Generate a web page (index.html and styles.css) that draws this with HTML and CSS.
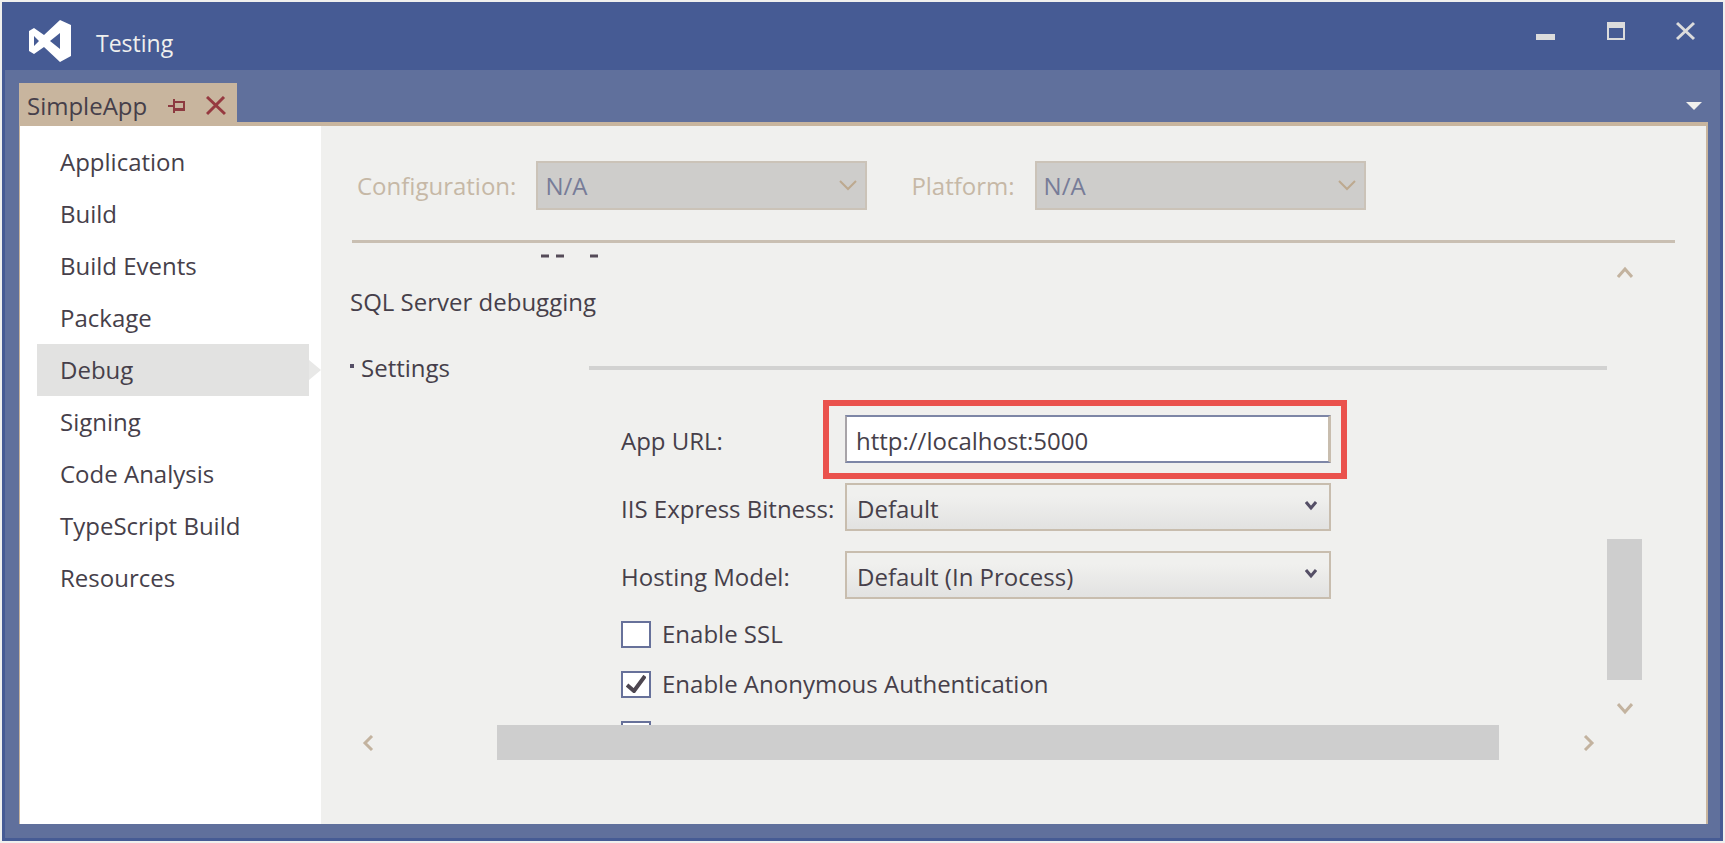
FILE: index.html
```html
<!DOCTYPE html>
<html lang="en">
<head>
<meta charset="utf-8">
<title>Testing</title>
<link rel="stylesheet" href="styles.css">
</head>
<body>
<div class="window">
  <header class="titlebar">
    <svg class="logo" width="43" height="42" viewBox="0 0 43 42" aria-hidden="true">
      <path fill="#fff" fill-rule="evenodd" d="M31 0 L42 5 V36 L31 42 L15 27 L5 34 L0 31 V11 L5 8 L15 15 Z M5 16 V26 L10 21 Z M31 13 L21 21 L31 29 Z"/>
    </svg>
    <h1 class="title">Testing</h1>
    <div class="caption">
      <button class="caption-btn" aria-label="Minimize"><svg width="20" height="20" viewBox="0 0 20 20"><path d="M0 13h19v6H0z" fill="#dcdcdc"/></svg></button>
      <button class="caption-btn" aria-label="Maximize"><svg width="20" height="20" viewBox="0 0 20 20"><path fill="#dcdcdc" fill-rule="evenodd" d="M1 1h18v18H1z M3 7v10h14V7z"/></svg></button>
      <button class="caption-btn" aria-label="Close"><svg width="20" height="20" viewBox="0 0 20 20"><path d="M1 2l17 16M18 2L1 18" stroke="#dcdcdc" stroke-width="3" fill="none"/></svg></button>
    </div>
  </header>
  <div class="frame">
    <div class="tabs">
      <div class="tab">
        <span>SimpleApp</span>
        <button class="tab-btn pin" aria-label="Pin tab"><svg width="18" height="16" viewBox="0 0 18 16"><path d="M0 8h6M6 1v14M7 4h9v8H7M7 11h9" fill="none" stroke="#8d3a40" stroke-width="2"/></svg></button>
        <button class="tab-btn" aria-label="Close tab"><svg width="20" height="20" viewBox="0 0 20 20"><path d="M1 1l18 17M18 1L1 18" fill="none" stroke="#963a40" stroke-width="3"/></svg></button>
      </div>
      <button class="tab-btn overflow" aria-label="Open documents"><svg width="16" height="8" viewBox="0 0 16 8"><path d="M0 0h16L8 8z" fill="#f0f0ee"/></svg></button>
    </div>
    <div class="panel">
      <nav class="sidebar">
        <a class="item" href="#application">Application</a>
        <a class="item" href="#build">Build</a>
        <a class="item" href="#build-events">Build Events</a>
        <a class="item" href="#package">Package</a>
        <a class="item active" href="#debug" aria-current="page">Debug</a>
        <a class="item" href="#signing">Signing</a>
        <a class="item" href="#code-analysis">Code Analysis</a>
        <a class="item" href="#typescript-build">TypeScript Build</a>
        <a class="item" href="#resources">Resources</a>
      </nav>
      <main class="page">
        <div class="target">
          <label class="target-label" for="configuration">Configuration:</label>
          <div class="combo disabled">
            <select id="configuration" disabled><option>N/A</option></select>
            <svg class="chevron" width="18" height="12" viewBox="0 0 18 12"><path d="M1 2l8 8 8-8" fill="none" stroke="#bda98f" stroke-width="2"/></svg>
          </div>
          <label class="target-label" for="platform">Platform:</label>
          <div class="combo disabled">
            <select id="platform" disabled><option>N/A</option></select>
            <svg class="chevron" width="18" height="12" viewBox="0 0 18 12"><path d="M1 2l8 8 8-8" fill="none" stroke="#bda98f" stroke-width="2"/></svg>
          </div>
        </div>
        <hr class="rule">
        <div class="scroller">
          <div class="view">
            <!-- Descenders of the row scrolled under the top edge -->
            <svg class="cutoff" width="60" height="18" viewBox="0 0 60 18" aria-hidden="true"><path d="M1 13h8M16 13h8M50 13h8" stroke="#554b58" stroke-width="3" fill="none"/></svg>
            <p class="line">SQL Server debugging</p>
            <div class="section">
              <span class="dot"></span>
              <h2 class="section-title">Settings</h2>
              <span class="section-rule"></span>
            </div>
            <form class="form">
              <label class="form-label" for="url">App URL:</label>
              <div class="field marked"><input class="text" id="url" type="text" value="http://localhost:5000"></div>
              <label class="form-label" for="bitness">IIS Express Bitness:</label>
              <div class="combo">
                <select id="bitness"><option>Default</option></select>
                <svg class="chevron" width="12" height="10" viewBox="0 0 12 10"><path d="M1 1l5 6 5-6" fill="none" stroke="#554f66" stroke-width="3"/></svg>
              </div>
              <label class="form-label" for="hosting">Hosting Model:</label>
              <div class="combo">
                <select id="hosting"><option>Default (In Process)</option></select>
                <svg class="chevron" width="12" height="10" viewBox="0 0 12 10"><path d="M1 1l5 6 5-6" fill="none" stroke="#554f66" stroke-width="3"/></svg>
              </div>
              <div class="checks">
                <label class="check"><input type="checkbox"><svg class="tick" width="20" height="18" viewBox="0 0 20 18"><path d="M1 10l7 6L19 1" fill="none" stroke="#4d4650" stroke-width="4"/></svg><span>Enable SSL</span></label>
                <label class="check"><input type="checkbox" checked><svg class="tick" width="20" height="18" viewBox="0 0 20 18"><path d="M1 10l7 6L19 1" fill="none" stroke="#4d4650" stroke-width="4"/></svg><span>Enable Anonymous Authentication</span></label>
                <div class="check"><input type="checkbox" aria-label="Option"></div>
              </div>
            </form>
          </div>
          <div class="vbar">
            <button class="bar-btn" aria-label="Scroll up"><svg width="16" height="12" viewBox="0 0 16 12"><path d="M1 11l7-8 7 8" fill="none" stroke="#c3b39f" stroke-width="3"/></svg></button>
            <div class="track-v"><div class="thumb-v"></div></div>
            <button class="bar-btn" aria-label="Scroll down"><svg width="16" height="12" viewBox="0 0 16 12"><path d="M1 1l7 8 7-8" fill="none" stroke="#c3b39f" stroke-width="3"/></svg></button>
          </div>
          <div class="hbar">
            <button class="bar-btn" aria-label="Scroll left"><svg width="12" height="16" viewBox="0 0 12 16"><path d="M10 1L3 8l7 7" fill="none" stroke="#c3b39f" stroke-width="3"/></svg></button>
            <div class="track-h"><div class="thumb-h"></div></div>
            <button class="bar-btn" aria-label="Scroll right"><svg width="12" height="16" viewBox="0 0 12 16"><path d="M2 1l7 7-7 7" fill="none" stroke="#c3b39f" stroke-width="3"/></svg></button>
          </div>
        </div>
      </main>
    </div>
  </div>
</div>
</body>
</html>
```
FILE: styles.css
```css
* {
  box-sizing: border-box;
}

body {
  margin: 0;
  height: 100vh;
  padding: 2px;
  background: #f0f0ee;
  color: #463f4a;
  font: 24px/32px "Open Sans", "Noto Sans", sans-serif;
}

button {
  display: flex;
  align-items: center;
  justify-content: center;
  padding: 0;
  border: 0;
  background: none;
}

svg {
  display: block;
  flex: none;
}

.window {
  display: flex;
  flex-direction: column;
  height: 100%;
  border: 3px solid #465b94;
  border-top: 0;
  background: #60709c;
}

.titlebar {
  display: flex;
  align-items: center;
  flex: none;
  height: 68px;
  padding: 14px 24px 0 24px;
  background: #465b94;
}

.logo {
  margin-bottom: 8px;
  align-self: flex-end;
}

.title {
  flex: 1;
  margin: 0 0 0 24px;
  color: #f0f0ee;
  font-size: 23px;
  font-weight: 400;
}

.caption {
  display: flex;
  align-self: flex-start;
  gap: 50px;
  padding-top: 5px;
}

.caption-btn {
  width: 20px;
  height: 20px;
}

.frame {
  display: flex;
  flex: 1;
  flex-direction: column;
  min-height: 0;
  padding: 13px 12px 14px 14px;
}

.tabs {
  display: flex;
  flex: none;
  justify-content: space-between;
  border-bottom: 4px solid #c8b59e;
}

.tab {
  display: flex;
  align-items: center;
  height: 39px;
  padding: 6px 11px 0 8px;
  background: #c8b59e;
}

.pin {
  margin: 0 20px 0 21px;
}

.overflow {
  width: 28px;
  height: 39px;
  padding: 6px 0 0;
}

.panel {
  display: flex;
  flex: 1;
  min-height: 0;
  border: solid #c8b59e;
  border-width: 0 2px 0 1px;
  background: #f0f0ee;
}

.sidebar {
  flex: none;
  width: 301px;
  padding: 10px 12px 0 17px;
  background: #fff;
}

.item {
  position: relative;
  display: block;
  padding: 10px 0 10px 23px;
  color: inherit;
  text-decoration: none;
}

.active {
  background: #e2e2e1;
}

.active::after {
  content: "";
  position: absolute;
  top: 16px;
  left: 100%;
  border: 10px solid transparent;
  border-left: 12px solid #e8e8e7;
  border-right: 0;
}

.page {
  display: flex;
  flex: 1;
  flex-direction: column;
  min-width: 0;
  padding: 35px 31px 64px 29px;
}

.target {
  display: flex;
  flex: none;
  align-items: center;
  padding-left: 7px;
}

.target-label {
  color: #c6b8a6;
}

.target .combo {
  width: 331px;
  margin: 0 44px 0 20px;
}

.combo {
  position: relative;
}

.combo select {
  display: block;
  width: 100%;
  height: 48px;
  padding: 4px 12px 0 10px;
  border: 2px solid #c8bdae;
  border-radius: 0;
  appearance: none;
  background: linear-gradient(#f0f0ee 25%, #e2e2e1);
  color: inherit;
  font: inherit;
}

.combo.disabled select {
  height: 49px;
  padding: 0 12px 0 7px;
  border-color: #cbc3b8;
  background: #cecdcb;
  color: #777c98;
  opacity: 1;
}

.chevron {
  position: absolute;
  top: 18px;
  right: 14px;
  pointer-events: none;
}

.disabled .chevron {
  right: 10px;
}

.rule {
  flex: none;
  height: 3px;
  margin: 30px 0 0 2px;
  border: 0;
  background: #c9bfb2;
}

.scroller {
  display: grid;
  flex: 1;
  grid-template: minmax(0, 1fr) 35px / minmax(0, 1fr) 35px;
  min-height: 0;
  margin-right: 33px;
}

.view {
  min-width: 0;
  overflow: hidden;
}

.cutoff {
  margin-left: 190px;
}

.line {
  margin: 25px 0 34px;
}

.section {
  display: flex;
  align-items: center;
}

.dot {
  width: 4px;
  height: 4px;
  margin: 0 7px 5px 0;
  background: #554f66;
}

.section-title {
  width: 228px;
  margin: 0;
  font-size: 24px;
  font-weight: 400;
}

.section-rule {
  flex: 1;
  height: 4px;
  background: #d2d2d1;
}

.form {
  display: grid;
  grid-template-columns: 224px minmax(0, 486px);
  align-items: center;
  gap: 20px 0;
  margin: 31px 0 0 271px;
}

.form-label {
  padding-top: 4px;
}

.field {
  position: relative;
}

.text {
  display: block;
  width: 100%;
  height: 48px;
  padding: 3px 9px 0;
  border: 2px solid #7d86a6;
  border-width: 2px 3px 2px 2px;
  border-right-color: #c8bdae;
  border-left-color: #a8a4a8;
  background: #fff;
  color: inherit;
  font: inherit;
}

.marked::after {
  content: "";
  position: absolute;
  inset: -15px -16px -16px -22px;
  border: 6px solid #ea524d;
  pointer-events: none;
}

.checks {
  display: grid;
  grid-column: 1 / -1;
  gap: 20px;
}

.check {
  position: relative;
  display: flex;
  align-items: center;
  gap: 11px;
  height: 30px;
}

.check input {
  width: 30px;
  height: 27px;
  margin: 0;
  border: 2px solid #67719a;
  appearance: none;
  background: #fff;
}

.tick {
  position: absolute;
  top: 6px;
  left: 5px;
  visibility: hidden;
}

input:checked + .tick {
  visibility: visible;
}

.vbar {
  display: flex;
  flex-direction: column;
  padding: 23px 0 10px;
}

.track-v {
  flex: 1;
  padding-top: 261px;
}

.thumb-v {
  height: 141px;
  background: #cecece;
}

.hbar {
  display: flex;
  padding: 0 12px;
}

.track-h {
  flex: 1;
  padding: 0 84px 0 123px;
}

.thumb-h {
  height: 35px;
  background: #cecece;
}
```
